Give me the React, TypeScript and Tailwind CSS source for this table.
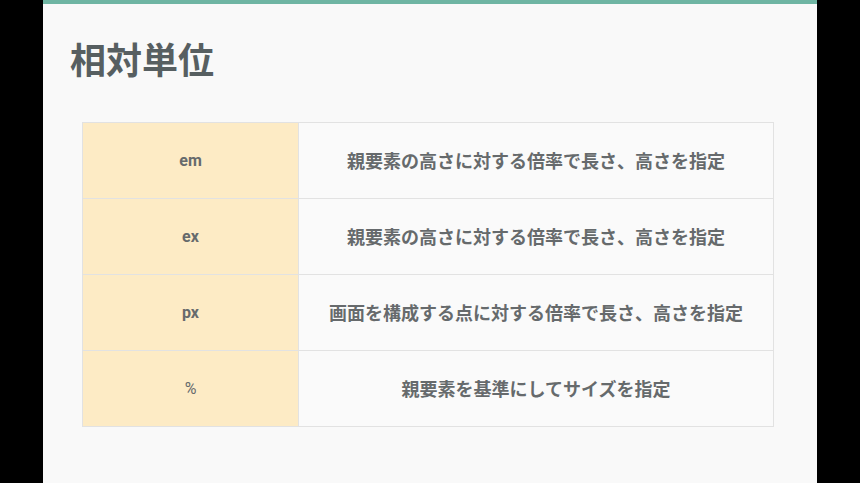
const rows = [
    { unit: 'em', desc: '親要素の高さに対する倍率で長さ、高さを指定', weight: 'font-bold' },
    { unit: 'ex', desc: '親要素の高さに対する倍率で長さ、高さを指定', weight: 'font-bold' },
    { unit: 'px', desc: '画面を構成する点に対する倍率で長さ、高さを指定', weight: 'font-bold' },
    { unit: '%', desc: '親要素を基準にしてサイズを指定', weight: 'font-normal' },
];

export default function App() {
    return (
        <div className="flex h-[483px] w-[860px] justify-center bg-black font-['Noto_Sans_CJK_JP','Noto_Sans',sans-serif]">
            <div className="flex w-[774px] flex-col bg-[#f9f9f9]">
                <div className="h-[4px] bg-[#6fb5a3]" />
                <h1 className="mt-[33px] pl-[27px] text-[36px] leading-[42px] font-bold text-[#575f61]">相対単位</h1>
                <table className="mt-[43px] ml-[39px] w-[692px] border-collapse text-[#666a6c]">
                    <tbody>
                        {rows.map((row) => (
                            <tr key={row.unit} className="h-[76px]">
                                <td className={`w-[216px] border border-[#e2e2e2] bg-[#fdebc5] text-center font-['Roboto',sans-serif] text-[16px] ${row.weight}`}>
                                    {row.unit}
                                </td>
                                <td className="border border-[#e2e2e2] bg-[#fafafa] text-center text-[18px] font-bold">
                                    {row.desc}
                                </td>
                            </tr>
                        ))}
                    </tbody>
                </table>
            </div>
        </div>
    );
}
